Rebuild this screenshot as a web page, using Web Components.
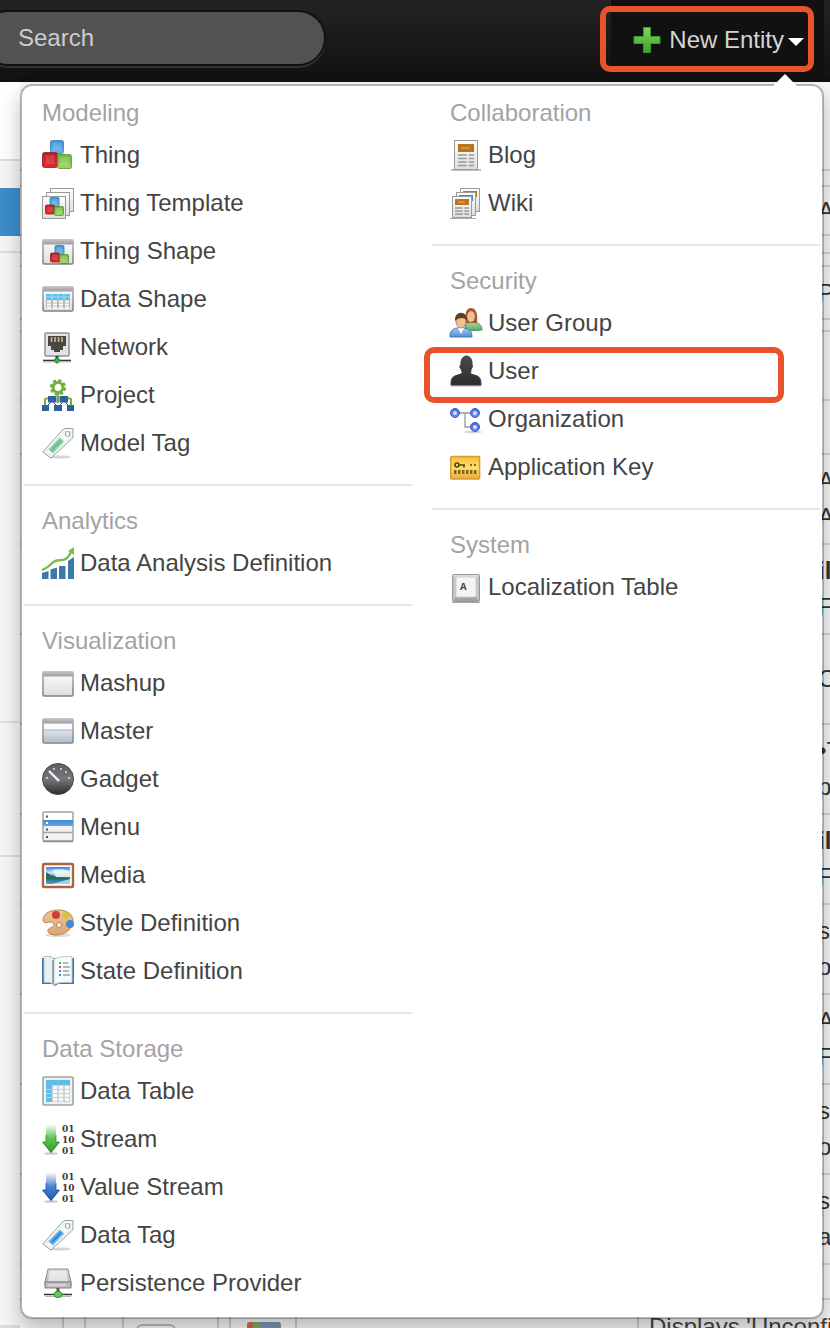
<!DOCTYPE html>
<html lang="en">
<head>
<meta charset="utf-8">
<title>New Entity</title>
<meta name="viewport" content="width=device-width">
<style>
body{margin:0;font:24px/36px "Liberation Sans",Arial,sans-serif;color:#444;background:#f6f6f6;overflow:hidden}
</style>
</head>
<body>
<app-shell>
  <top-bar slot="bar"></top-bar>
  <side-strip slot="side"></side-strip>
  <entity-grid slot="main"></entity-grid>
  <entity-menu slot="menu">
    <menu-section slot="left" label="Modeling">
      <menu-item icon="thing">Thing</menu-item>
      <menu-item icon="template">Thing Template</menu-item>
      <menu-item icon="shape">Thing Shape</menu-item>
      <menu-item icon="datashape">Data Shape</menu-item>
      <menu-item icon="network">Network</menu-item>
      <menu-item icon="project">Project</menu-item>
      <menu-item icon="modeltag">Model Tag</menu-item>
    </menu-section>
    <menu-section slot="left" label="Analytics">
      <menu-item icon="analysis">Data Analysis Definition</menu-item>
    </menu-section>
    <menu-section slot="left" label="Visualization">
      <menu-item icon="mashup">Mashup</menu-item>
      <menu-item icon="master">Master</menu-item>
      <menu-item icon="gadget">Gadget</menu-item>
      <menu-item icon="menu">Menu</menu-item>
      <menu-item icon="media">Media</menu-item>
      <menu-item icon="style">Style Definition</menu-item>
      <menu-item icon="state">State Definition</menu-item>
    </menu-section>
    <menu-section slot="left" label="Data Storage">
      <menu-item icon="table">Data Table</menu-item>
      <menu-item icon="stream">Stream</menu-item>
      <menu-item icon="valuestream">Value Stream</menu-item>
      <menu-item icon="datatag">Data Tag</menu-item>
      <menu-item icon="persist">Persistence Provider</menu-item>
    </menu-section>
    <menu-section slot="right" label="Collaboration">
      <menu-item icon="blog">Blog</menu-item>
      <menu-item icon="wiki">Wiki</menu-item>
    </menu-section>
    <menu-section slot="right" label="Security">
      <menu-item icon="group">User Group</menu-item>
      <menu-item icon="user" marked>User</menu-item>
      <menu-item icon="org">Organization</menu-item>
      <menu-item icon="key">Application Key</menu-item>
    </menu-section>
    <menu-section slot="right" label="System">
      <menu-item icon="locale">Localization Table</menu-item>
    </menu-section>
  </entity-menu>
</app-shell>
<script>
const define = (name, render) => customElements.define(name, class extends HTMLElement {
  constructor() {
    super();
    this.attachShadow({mode: 'open'});
  }
  connectedCallback() {
    this.shadowRoot.innerHTML = render(this);
  }
});

const grad = (id, ...c) => `<linearGradient id="${id}" x1="0" y1="0" x2="0" y2="1">${c.map((v, i) => `<stop offset="${i / (c.length - 1)}" stop-color="${v}"/>`).join('')}</linearGradient>`;
const defs = `<defs>
${grad('blue', '#3f93d2', '#68b7ea')}${grad('red', '#b81f25', '#e0282c')}${grad('green', '#6fb43c', '#a0d767')}
${grad('bar', '#c9c9cc', '#9c9ca0')}${grad('paper', '#fdfdfd', '#dedede')}${grad('edge', '#b4b4b4', '#808084')}
${grad('steel', '#dbe2ea', '#b3c0cd')}${grad('dial', '#5f5f62', '#77777b', '#2c2c30')}${grad('sel', '#3f8ad0', '#69a8e0')}
${grad('sky', '#2f7fe0', '#cdeaf8', '#2b6f68', '#4aa3dc')}${grad('wood', '#ecc59a', '#dba673')}
${grad('garrow', '#ffffff', '#5fc24e', '#2f9a2a')}${grad('barrow', '#ffffff', '#4b82d4', '#2257ae')}
${grad('drive', '#dcdcde', '#a9a9ad')}${grad('gold', '#f6bd3c', '#ffe06a', '#eda93a')}${grad('dark', '#4b4b4d', '#2c2c2e')}
${grad('plus', '#7fd65c', '#3aa22c')}${grad('shirt', '#a5cdf5', '#4b8bd6')}${grad('shirt2', '#a9dc9f', '#4fa95a')}${grad('ball', '#4668dc', '#6e90f2')}
</defs>`;

const cube = (x, y, s, f, k) => `<rect x="${x + .5}" y="${y + .5}" width="${s - 1}" height="${s - 1}" rx="${s / 8}" fill="url(#${f})" stroke="${k}" stroke-opacity=".75"/><rect x="${x + s * .22}" y="${y + s * .2}" width="${s * .56}" height="${s * .56}" rx="1" fill="#fff" opacity=".14"/>`;
const cubes = (x, y, s) => cube(x + s * .45, y, s, 'blue', '#2b78b5') + cube(x, y + s * .75, s, 'red', '#8f171c') + cube(x + s * .9, y + s * .9, s, 'green', '#4f8f2a');
const win = (y, body = 'url(#paper)') => `<rect x="1" y="${y + 1}" width="30" height="24" rx="1.5" fill="${body}" stroke="url(#edge)" stroke-width="1.6"/><rect x=".6" y="${y}" width="30.8" height="5.5" rx="1.5" fill="url(#bar)"/>`;
const sheet = (x, y, w, h, top = '') => `<rect x="${x + .5}" y="${y + .5}" width="${w - 1}" height="${h - 1}" fill="url(#paper)" stroke="#9b9b9b"/>${top ? `<rect x="${x + 3}" y="${y + 3}" width="${w - 6}" height="${h * .25}" fill="${top}"/>` : ''}`;
const tag = (c, k) => `<ellipse cx="18" cy="30" rx="11" ry="1.6" fill="#bbb" opacity=".6"/><path d="M.8 25 21 2.500 24 1.500H31V10L29.500 12 9 31Z" fill="#fbfefd" stroke="#8c9c9c"/><path d="M3.500 25 22.500 4.500 28.500 4V10L9.500 28.500Z" fill="none" stroke="#cfdcda" stroke-width=".8"/><circle cx="25.500" cy="7" r="2.400" fill="#fff" stroke="#8c9c9c"/><path d="M8.500 24.500 20 12.500" stroke="${c}" stroke-width="6"/><path d="M10 23 19 13.500" stroke="${k}" stroke-width="2"/>`;
const bits = `<g font-family="DejaVu Serif" font-size="9" font-weight="700" fill="#3a3a3a"><text x="20" y="9">01</text><text x="20" y="20">10</text><text x="20" y="31">01</text></g>`;
const arrow = (f, k) => `<ellipse cx="9" cy="30.500" rx="7" ry="1.300" fill="#aaa" opacity=".6"/><path d="M4 1h10v18H18L9 30 0 19h4Z" fill="url(#${f})"/><path d="M4 12v7H.8L9 29.500 17.200 19H14v-7" fill="none" stroke="${k}" opacity=".75"/>`;
const lines = (x, y, w, n, gap = 3) => Array.from({length: n}, (_, i) => `<path d="M${x} ${y + i * gap}h${w * .55}m${w * .12} 0h${w * .33}" stroke="#999" stroke-width="1.500"/>`).join('');

const icons = {
  thing: cube(8, 1, 14, 'blue', '#2b78b5') + cube(0, 13, 16, 'red', '#8f171c') + cube(15, 15, 15, 'green', '#4f8f2a'),
  template: sheet(8, 1, 24, 24) + sheet(4, 5, 24, 24) + sheet(0, 9, 24, 23) + cubes(3, 10, 10),
  shape: win(4) + cubes(8, 10, 10),
  datashape: win(3) + `<path d="M4 11h24v6H4z" fill="#63bdec"/><path d="M4 17h24v8H4z" fill="#b9b9b9"/><path d="M5 18.500h4m2 0h4m2 0h4m2 0h4M5 21.500h4m2 0h4m2 0h4m2 0h4M5 24.500h4m2 0h4m2 0h4m2 0h4" stroke="#fff" stroke-width="2"/><path d="M4 14h24M10 11v6M16 11v6M22 11v6" stroke="#a9dcf5"/>`,
  network: `<rect x="3" y="2" width="24" height="23" rx="1" fill="#e2e2e8" stroke="#909096" stroke-width="1.500"/><path d="M6 5h18v10h-3v4h-3v2h-6v-2H9v-4H6Z" fill="#4b4646"/><path d="M9.500 6v5m3.500-5v5m3.500-5v5m3.500-5v5" stroke="#d6b77d" stroke-width="1.600"/><path d="M15 25v5" stroke="#333" stroke-width="3"/><path d="M1 29.500h28" stroke="#333" stroke-width="1.600"/><path d="M1 31h28" stroke="#bbb"/><path d="m15 26 3 3.500-3 3-3-3z" fill="#34b636" stroke="#187a22"/>`,
  project: `<circle cx="16" cy="8.500" r="6.600" fill="none" stroke="#76af41" stroke-width="3.200" stroke-dasharray="3.200 1.980"/><circle cx="16" cy="8.500" r="4.900" fill="none" stroke="#76af41" stroke-width="3"/><path d="M16 15v9M6 19.500H4q-1 0-1 1V26M26 19.500h2q1 0 1 1V26" fill="none" stroke="#76af41" stroke-width="2"/><path d="M6 17h8.500v6.500H6zm11.500 0H26v6.500h-8.500zM0 26h7v6H0zm12 0h8v6h-8zm13 0h7v6h-7z" fill="#2f6399"/><path d="m9 23-3 3m5-3 3 3m9-3 3 3m-5-3-3 3" stroke="#2f6399"/>`,
  modeltag: tag('#8ccfa4', '#6cbb89'),
  datatag: tag('#62b4e8', '#2e86d3'),
  analysis: `<path d="M0 26 6.500 24v8H0zM8.500 22.500 15 20.500V32H8.500zM17 19h6.500v13H17zM26 14 32 10v22h-6z" fill="#3d78a8"/><path d="M0 23q5-2 8-5 4-4 7-4.500 7 0 10-2.500 3-3 5-8" fill="none" stroke="#80ba52" stroke-width="2.400"/><path d="m26 4 6-4v8Z" fill="#80ba52"/>`,
  mashup: win(4),
  master: win(3) + `<path d="M2 9h28v7H2z" fill="#fafafa"/><path d="M2 15h28v12H2z" fill="url(#steel)"/><path d="M2 15h28" stroke="#a8b3c0"/>`,
  gadget: `<circle cx="16" cy="16" r="15.500" fill="url(#dial)" stroke="#48484a"/><path d="M7 8l10 10" stroke="#f5f5f5" stroke-width="2.300"/><g fill="#eee"><circle cx="12" cy="6" r=".9"/><circle cx="19" cy="6" r=".9"/><circle cx="24" cy="9" r=".9"/><circle cx="27" cy="15" r=".9"/><circle cx="5" cy="15" r=".9"/></g>`,
  menu: `<rect x="1" y="1" width="30" height="29" rx="1" fill="#f1f1f1" stroke="#a3a3a3" stroke-width="1.500"/><path d="M2 2h28v7H2z" fill="#fff"/><path d="M1 9h30v6H1z" fill="url(#sel)"/><path d="M1 21.500h30" stroke="#a3a3a3" stroke-width="1.500"/><path d="M1 30.500h30" stroke="#8b8b8b" stroke-width="1.500"/><path d="M4 5.500h2M4 18.500h2M4 26h2" stroke="#555" stroke-width="2"/><path d="M4 12h2" stroke="#fff" stroke-width="2"/>`,
  media: `<rect x="1" y="5" width="30" height="23" rx="1" fill="#fff" stroke="#ad6440" stroke-width="2.400"/><path d="M4 8h24v17H4z" fill="url(#sky)"/><path d="M10 11q9-2 18 1v6H14Z" fill="#eef8fd" opacity=".85"/><path d="M4 13q5 4 10 5l14 1v1.500H4Z" fill="#296b5c"/><path d="M10 25 28 20v5z" fill="#b2e3f7" opacity=".8"/>`,
  style: `<ellipse cx="16" cy="28" rx="13" ry="2" fill="#bbb" opacity=".5"/><path d="M1 13C1 6 9 3 17 3c9 0 14 5 14 11 0 8-8 14-17 14-6 0-9-3-8-5 1-3 6-2 6-5 0-2-2-3-4-3-4 1-7 1-7-2Z" fill="url(#wood)" stroke="#b9834f"/><circle cx="14" cy="8" r="4" fill="#d43b37"/><circle cx="24" cy="8" r="3.500" fill="#d6c43c"/><circle cx="28" cy="17" r="4" fill="#4289cf"/><circle cx="17" cy="18" r="2.500" fill="#fff6e9" stroke="#b9834f"/>`,
  state: `<path d="M0 3h32v26H16l-3 2-3-2H0Z" fill="#456fac"/><path d="M2 1.500q9-1 10 3v25q-3-3-10-2Z" fill="#e9f1f1" stroke="#afc1c3"/><path d="M12 4.500Q16 1 30 1.500v26q-12-1-18 2Z" fill="#f5fafa" stroke="#bdcccd"/><path d="M11 5v24" stroke="#94a7aa" stroke-width="2"/><path d="M17 8h2" stroke="#46b044" stroke-width="2"/><path d="M17 12h2" stroke="#d34b43" stroke-width="2"/><path d="M17 16h2M17 20h2" stroke="#3f91d5" stroke-width="2"/><path d="M21 8h5m-5 4h7m-7 4h6m-6 4h7" stroke="#99a5a5" stroke-width="1.300"/>`,
  table: `<rect x="1" y="2" width="30" height="28" rx="1" fill="#eef1f2" stroke="#9ba6a8" stroke-width="1.600"/><path d="M4 5h24v22H4z" fill="#cbd5d8"/><path d="M4 5h24v5H4zM4 10h6v17H4z" fill="#62bce9"/><path d="M11 12.500h4m2 0h4m2 0h4m-16 4h4m2 0h4m2 0h4m-16 4h4m2 0h4m2 0h4m-16 4h4m2 0h4m2 0h4" stroke="#fff" stroke-width="2.500"/><path d="M4 14.500h6m-6 4h6m-6 4h6" stroke="#a5daf3"/>`,
  stream: arrow('garrow', '#27831f') + bits,
  valuestream: arrow('barrow', '#1c478f') + bits,
  persist: `<path d="M6 2h20l3 13v4H3v-4Z" fill="url(#drive)" stroke="#919195"/><path d="M8 4h16l2 10H6Z" fill="#f4f4f5" opacity=".7"/><path d="M3 15h26v6H3z" fill="#bcbcc0" stroke="#808084"/><path d="M6 18h18" stroke="#eee"/><path d="M16 21v6" stroke="#555" stroke-width="3"/><path d="M2 27.500h28" stroke="#333" stroke-width="1.500"/><path d="M3 29.500h26" stroke="#bbb"/><ellipse cx="16" cy="27.500" rx="4" ry="3" fill="#5bd34f" stroke="#258a28"/>`,
  blog: `<path d="M1 31h30" stroke="#aaa" stroke-width="1.500"/>` + sheet(4, 1, 24, 30) + `<path d="M8 5h16v8H8z" fill="#b97518"/><path d="M11 9h9" stroke="#e0b671"/>` + lines(8, 16, 16, 4, 3.5),
  wiki: sheet(10, 1, 20, 24, '#b97518') + sheet(6, 5, 20, 24, '#3f8cc9') + `<path d="M0 31.500h26" stroke="#aaa"/>` + sheet(2, 9, 20, 22) + `<path d="M5 12h14v6H5z" fill="#b97518"/><path d="M8 15h7" stroke="#e0b671"/>` + lines(5, 21, 14, 3),
  group: `<path d="M15 24c0-9 2-8 5-9h4c5 1 8 3 8 8Z" fill="url(#shirt2)" stroke="#50935a"/><path d="M15 16c0-10 1-15 6-15s7 6 6 15Z" fill="#a2592b"/><ellipse cx="21" cy="9.500" rx="3.800" ry="5.500" fill="#f0c193"/><path d="M0 30c0-6 2-8 7-9h7c5 1 8 3 8 9Z" fill="url(#shirt)" stroke="#4677b5"/><path d="m8 21 3 6 3-6Z" fill="#fff"/><ellipse cx="11" cy="14" rx="5" ry="7" fill="#f0c193" stroke="#b28360"/><path d="M5 14C4 3 18 3 17 14c-2-4-8-4-12 0Z" fill="#624026"/>`,
  user: `<path d="M1 31h30" stroke="#aaa"/><path d="M11 10c-1-12 12-12 11 0 1 1 0 3-1 4 0 4-1 4 0 5l6 2c3 1 4 4 4 9H1c0-5 1-8 4-9l6-2c2-1 1-2 0-5-1-1-2-3 0-4Z" fill="url(#dark)" stroke="#333"/>`,
  org: `<ellipse cx="23" cy="29" rx="9" ry="1.500" fill="#bbb" opacity=".6"/><path d="M9 10h12M15 10v14h6" fill="none" stroke="#9a9a9a" stroke-width="1.300"/><g fill="url(#ball)" stroke="#3d5cc8"><circle cx="5" cy="10" r="4.500"/><circle cx="25" cy="10" r="4.500"/><circle cx="25" cy="24" r="4.500"/></g><g fill="#d5e1ff"><circle cx="5" cy="10" r="2"/><circle cx="25" cy="10" r="2"/><circle cx="25" cy="24" r="2"/></g>`,
  key: `<rect x=".8" y="5.500" width="28.800" height="22.500" rx="1" fill="url(#gold)" stroke="#d99a38" stroke-width="1.500"/><circle cx="7" cy="14" r="2" fill="none" stroke="#54430f" stroke-width="1.600"/><path d="M9 14h6m-1 0v2.500M20 14h2m2 0h2" stroke="#54430f" stroke-width="1.600"/><path d="M4 21h23" stroke="#7d6424" stroke-width="4" stroke-dasharray="2.500 1.500"/>`,
  locale: `<path d="M2 31.500h28" stroke="#aaa"/><rect x="2.500" y="3.500" width="27" height="27" rx="1.500" fill="#c4c4c4" stroke="#979797"/><path d="m3 4 4 4h18l4-4Z" fill="#dedede"/><path d="m3 30 3-4h20l3 4Z" fill="#a2a2a2"/><rect x="6" y="6" width="20" height="20" rx="1.500" fill="#f4f4f4" stroke="#d0d0d0"/><text x="10" y="19" font-family="Liberation Mono" font-size="11" font-weight="700" fill="#444">A</text>`,
  plus: `<path d="M12.500 3.500h7v9h9.500v7h-9.500v9h-7v-9H3v-7h9.500Z" fill="url(#plus)" stroke="#3b9a2e"/>`
};

define('entity-icon', el => `<style>:host{display:block;width:32px;height:32px;flex:none}svg{display:block;overflow:visible}</style>
<svg width="32" height="32" viewBox="0 0 32 32" aria-hidden="true">${defs}${icons[el.getAttribute('name')]}</svg>`);

define('focus-frame', () => `<style>:host{display:block;position:absolute;box-sizing:border-box;border:6px solid #e8532b;border-radius:10px;pointer-events:none}</style>`);

define('menu-item', el => `<style>
:host{display:block;position:relative}
a{display:flex;align-items:center;gap:6px;height:48px;padding-left:18px;color:#444;text-decoration:none;white-space:nowrap}
focus-frame{inset:0 36px -8px -8px}
</style><a href="#${el.getAttribute('icon')}"><entity-icon name="${el.getAttribute('icon')}"></entity-icon><slot></slot></a>${el.hasAttribute('marked') ? '<focus-frame></focus-frame>' : ''}`);

define('menu-section', el => `<style>
:host{display:block}
h2{margin:0;padding-left:18px;font:inherit;color:#a3a3a3}
</style><h2>${el.getAttribute('label')}</h2><slot></slot>`);

define('entity-menu', () => `<style>
:host{display:block;position:absolute;z-index:2;top:84px;left:20px;right:6px;box-sizing:border-box;background:#fff;background-clip:padding-box;border:2px solid rgba(0,0,0,.25);border-radius:12px;box-shadow:0 10px 20px rgba(0,0,0,.25)}
nav{display:grid;grid-template-columns:1fr 1fr;gap:20px;padding:9px 2px 10px}
::slotted(menu-section:not([label=Modeling],[label=Collaboration])){border-top:2px solid #e5e5e5;margin-top:17px;padding-top:17px}
.tip{position:absolute;top:-12px;right:24px;width:26px;height:13px;background:#fff;clip-path:polygon(50% 0,100% 100%,0 100%)}
</style><div class="tip"></div><nav aria-label="New Entity"><div><slot name="left"></slot></div><div><slot name="right"></slot></div></nav>`);

define('top-bar', () => `<style>
:host{display:flex;justify-content:space-between;position:relative;height:82px;background:linear-gradient(#232323,#111)}
form{margin:10px 0 0 -20px;width:346px}
input{box-sizing:border-box;width:100%;height:56px;padding:0 36px;border:2px solid #111;border-radius:28px;background:#525252;color:#ccc;font:inherit;outline:0;box-shadow:0 2px 0 #333}
input::placeholder{color:#ccc;opacity:1}
button{display:flex;align-items:center;margin:0 6px 0 0;padding:0 20px 2px;border:0;background:#111;color:#d4d4d4;font:inherit;white-space:nowrap}
entity-icon{margin-right:6px}
i{width:16px;height:8px;margin:4px 0 0 4px;background:#fff;clip-path:polygon(0 0,100% 0,50% 100%)}
focus-frame{top:6px;right:16px;width:214px;height:66px}
</style><form role="search"><input type="text" aria-label="Search" placeholder="Search"></form>
<button type="button" aria-haspopup="true" aria-expanded="true"><entity-icon name="plus"></entity-icon>New Entity<i></i></button><focus-frame></focus-frame>`);

define('side-strip', () => `<style>
:host{display:block;background:#f5f5f5}
div{box-sizing:border-box;border-bottom:2px solid #ddd}
.head{height:79px;background:#fff}.gap{height:27px;border:0}
.on{height:48px;background:#3c8dcb;border:0}.a{height:17px}.b{height:470px}.c{height:134px}
.d{height:468px;border:0}.end{height:40px;background:#ddd;border:0}
</style><div class="head"></div><div class="gap"></div><div class="on"></div><div class="a"></div><div class="b"></div><div class="c"></div><div class="d"></div><div class="end"></div>`);

const rows = [[89, ''], [16, ''], [49, 'A'], [18, ''], [13, ''], [53, 'Pe'], [12, ''], [69, ''], [54, ''], [90, 'A<br>Al'], [90, '<b>il</b><br>F'], [90, 'C'], [90, '•T<br>p'], [90, '<b>il</b><br>F'], [90, 's<br>or'], [90, 'A<br>F'], [90, 's<br>o'], [90, 's<br>a'], [35, '']];
define('entity-grid', () => `<style>
:host{display:block;background:#f7f7f7}
.row{box-sizing:border-box;display:flex;align-items:center;justify-content:flex-end;border-bottom:2px solid #d5d5d5}
.row span{width:12px;overflow:hidden;white-space:nowrap;color:#333}
.last{display:flex;height:45px}
.last div{box-sizing:border-box;border-right:2px solid #ccc}
.last .text{flex:1;border:0;padding:9px 0 0 10px;white-space:nowrap;overflow:hidden}
.last .pick{margin:24px 12px;width:40px;height:36px;border:2px solid #bbb;border-radius:6px}
.last .app{margin:22px 14px 0 16px;height:30px;border:0;background:linear-gradient(90deg,#c86b55 6px,#84a860 6px 12px,#7f93b0 12px);border-radius:3px}
</style>${rows.map(([h, t]) => `<div class="row" style="height:${h}px"><span>${t}</span></div>`).join('')}
<div class="last"><div style="width:44px"></div><div style="width:22px"></div><div style="width:38px"></div><div style="width:95px"><div class="pick"></div></div><div style="width:12px"></div><div style="width:66px"><div class="app"></div></div><div style="width:342px"></div><div class="text">Displays 'Unconfirmed'</div></div>`);

define('app-shell', () => `<style>
:host{display:block;position:relative;height:100vh;overflow:hidden}
main{display:grid;grid-template-columns:20px minmax(0,1fr)}
</style><slot name="bar"></slot><main><slot name="side"></slot><slot name="main"></slot></main><slot name="menu"></slot>`);
</script>
</body>
</html>
